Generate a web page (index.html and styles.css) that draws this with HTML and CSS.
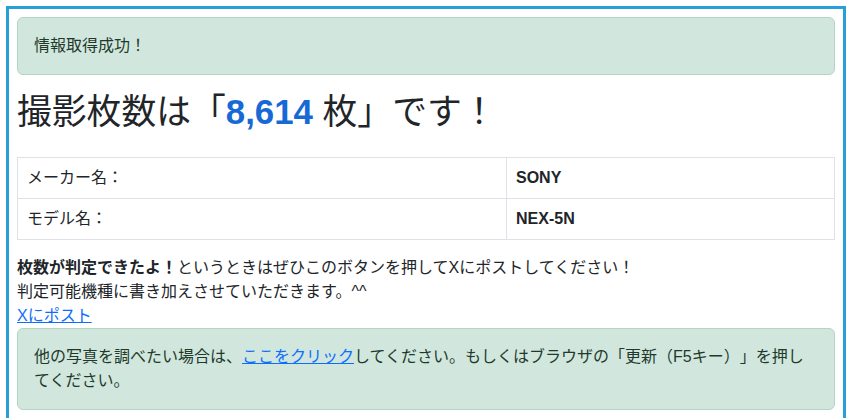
FILE: index.html
```html
<!DOCTYPE html>
<html lang="ja">
  <head>
    <meta charset="utf-8" />
    <meta name="viewport" content="width=device-width, initial-scale=1.0" />
    <title>撮影枚数チェック</title>
    <link rel="stylesheet" href="styles.css">
  </head>
  <body>
    <div class="frame">
      <div class="alert alert-success">情報取得成功！</div>

      <h1 class="result">撮影枚数は「<span class="count">8,614</span> 枚」です！</h1>

      <table class="info-table">
        <tr>
          <td class="label">メーカー名：</td>
          <td class="value">SONY</td>
        </tr>
        <tr>
          <td class="label">モデル名：</td>
          <td class="value">NEX-5N</td>
        </tr>
      </table>

      <div class="share">
        <b>枚数が判定できたよ！</b>というときはぜひこのボタンを押してXにポストしてください！<br />
        判定可能機種に書き加えさせていただきます。^^<br />
        <a href="#">Xにポスト</a>
      </div>

      <div class="alert alert-success">
        他の写真を調べたい場合は、<a href="#">ここをクリック</a>してください。もしくはブラウザの「更新（F5キー）」を押してください。
      </div>
    </div>
  </body>
</html>
```

FILE: styles.css
```css
html,
body {
  margin: 0;
  font-family: "Liberation Sans", "Noto Sans CJK JP", sans-serif;
  font-size: 16px;
  line-height: 1.5;
  color: #212529;
  background: #fff;
  text-spacing-trim: space-all;
}

a {
  color: #0d6efd;
  text-decoration: underline;
}

.frame {
  margin: 6px 5px 0 6px;
  border: 3px solid #27a0d8;
  padding: 8px 8px 40px;
}

.alert {
  padding: 16px;
  border: 1px solid #b3d5c5;
  border-radius: 6px;
  margin-bottom: 16px;
}

.alert-success {
  background: #d1e7dd;
  color: #1f3a2c;
}

.result {
  font-size: 34.8px;
  font-weight: 400;
  line-height: 1.2;
  margin: 0 0 24px;
}

.count {
  color: #1769d6;
  font-weight: bold;
}

.info-table {
  width: 100%;
  border-collapse: collapse;
  margin-bottom: 16px;
}

.info-table td {
  border: 1px solid #dee2e6;
  padding: 8px 9px;
}

.label {
  width: 470px;
}

.value {
  font-weight: bold;
}

.share {
  margin: 0;
}

.share b {
  font-weight: bold;
}
```
